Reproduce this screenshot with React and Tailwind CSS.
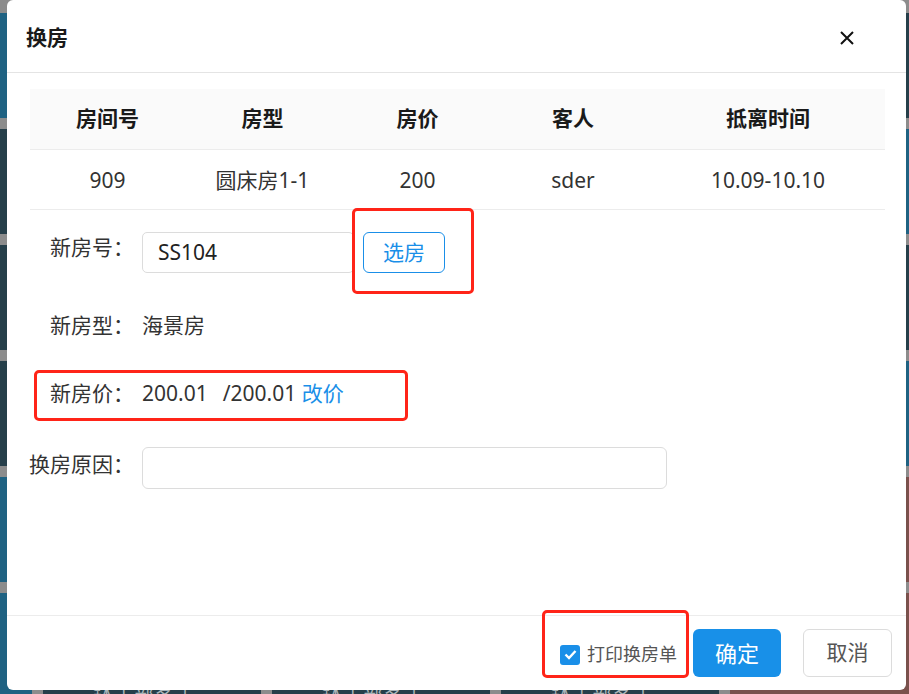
import React from 'react';

const font = { fontFamily: '"Noto Sans", "Noto Sans CJK SC", sans-serif' };

// 背景里的房态卡片（被弹窗盖住，只露出边缘）
const bgRows = [
  ['bg-[#1f6282]', 'bg-[#263f4a]', 'bg-[#263f4a]', 'bg-[#263f4a]', 'bg-[#263f4a]'],
  ['bg-[#263f4a]', 'bg-[#263f4a]', 'bg-[#263f4a]', 'bg-[#263f4a]', 'bg-[#1f6282]'],
  ['bg-[#263f4a]', 'bg-[#263f4a]', 'bg-[#263f4a]', 'bg-[#263f4a]', 'bg-[#263f4a]'],
  ['bg-[#263f4a]', 'bg-[#263f4a]', 'bg-[#263f4a]', 'bg-[#263f4a]', 'bg-[#1f6282]'],
  ['bg-[#1f6282]', 'bg-[#263f4a]', 'bg-[#263f4a]', 'bg-[#263f4a]', 'bg-[#7a514c]'],
  ['bg-[#1f6282]', 'bg-[#263f4a]', 'bg-[#263f4a]', 'bg-[#263f4a]', 'bg-[#7a514c]'],
];

const cols = [
  { title: '房间号', value: '909', w: 'w-[155px]' },
  { title: '房型', value: '圆床房1-1', w: 'w-[155px]' },
  { title: '房价', value: '200', w: 'w-[155px]' },
  { title: '客人', value: 'sder', w: 'w-[156px]' },
  { title: '抵离时间', value: '10.09-10.10', w: 'flex-1' },
];

function Background() {
  return (
    <div className="absolute left-[-186px] top-[13px] grid grid-cols-[repeat(5,218px)] auto-rows-[105px] gap-x-[11px] gap-y-[11px]">
      {bgRows.flat().map((c, i) => (
        <div key={i} className={`${c} text-[#aab4b8] text-[20px] px-[50px] pt-[92px] leading-none`}>
          {i >= 25 && i < 29 ? '鉢 | 部客 |' : ''}
        </div>
      ))}
    </div>
  );
}

export default function App() {
  return (
    <div className="relative w-[909px] h-[694px] overflow-hidden bg-[#8c8c8c]" style={font}>
      <Background />

      <div className="absolute left-[7px] top-0 w-[899px] h-[690px] bg-white rounded-[6px] flex flex-col">
        {/* 标题 */}
        <div className="h-[73px] shrink-0 border-b border-[#e4e4e4] flex items-center justify-between pl-[19px] pr-[52px] pt-[4px]">
          <span className="text-[21px] font-bold text-[#1a1a1a]">换房</span>
          <svg width="14" height="14" viewBox="0 0 14 14">
            <path d="M1 1 L13 13 M13 1 L1 13" stroke="#111" strokeWidth="2" />
          </svg>
        </div>

        {/* 房间信息表 */}
        <div className="mt-[16px] ml-[23px] w-[855px] text-[21px]">
          <div className="flex h-[61px] bg-[#fafafa] border-b border-[#ececec] items-center font-bold text-[#1a1a1a]">
            {cols.map((c) => (
              <div key={c.title} className={`${c.w} text-center`}>{c.title}</div>
            ))}
          </div>
          <div className="flex h-[60px] border-b border-[#ececec] items-center text-[#333] pt-[2px]">
            {cols.map((c) => (
              <div key={c.title} className={`${c.w} text-center`}>{c.value}</div>
            ))}
          </div>
        </div>

        {/* 换房表单 */}
        <div className="pl-[22px] text-[21px] text-[#333]">
          <div className="flex items-start gap-[8px] mt-[22px]">
            <div className="w-[105px] text-right leading-[30px]">新房号：</div>
            <div className="w-[212px] h-[41px] border border-[#dcdcdc] rounded-[5px] flex items-center px-[15px] text-[#222]">SS104</div>
            <button className="ml-[1px] w-[82px] h-[41px] border border-[#1a8fe8] rounded-[6px] text-[#1a8fe8]">
              选房
            </button>
          </div>

          <div className="flex items-center gap-[8px] mt-[33px] h-[40px]">
            <div className="w-[105px] text-right">新房型：</div>
            <div>海景房</div>
          </div>

          <div className="flex items-center gap-[8px] mt-[28px] h-[40px]">
            <div className="w-[105px] text-right">新房价：</div>
            <div>
              200.01<span className="ml-[15px]">/200.01</span> <span className="text-[#1a8fe8]">改价</span>
            </div>
          </div>

          <div className="flex items-start gap-[8px] mt-[33px]">
            <div className="w-[105px] text-right leading-[34px]">换房原因：</div>
            <div className="w-[525px] h-[42px] border border-[#dcdcdc] rounded-[6px]"></div>
          </div>
        </div>

        {/* 底部按钮 */}
        <div className="mt-auto h-[75px] border-t border-[#ececec] flex items-center justify-end pr-[14px]">
          <label className="flex items-center gap-[7px] text-[18px] text-[#555] mr-[16px] mt-[3px]">
            <span className="w-[20px] h-[20px] rounded-[3px] bg-[#1a8fe8] flex items-center justify-center">
              <svg width="13" height="11" viewBox="0 0 13 11">
                <path d="M1.5 5.5 L5 9 L11.5 2" fill="none" stroke="#fff" strokeWidth="2.4" />
              </svg>
            </span>
            打印换房单
          </label>
          <button className="w-[88px] h-[48px] rounded-[6px] bg-[#1890e8] text-white text-[22px]">确定</button>
          <button className="ml-[22px] w-[89px] h-[48px] rounded-[6px] border border-[#dcdcdc] text-[#555] text-[21px]">取消</button>
        </div>
      </div>

      {/* 红色标注框 */}
      <div className="absolute left-[352px] top-[208px] w-[122px] h-[86px] border-[3px] border-[#ff2418] rounded-[5px]"></div>
      <div className="absolute left-[34px] top-[370px] w-[374px] h-[51px] border-[3px] border-[#ff2418] rounded-[5px]"></div>
      <div className="absolute left-[542px] top-[610px] w-[147px] h-[68px] border-[3px] border-[#ff2418] rounded-[5px]"></div>
    </div>
  );
}
